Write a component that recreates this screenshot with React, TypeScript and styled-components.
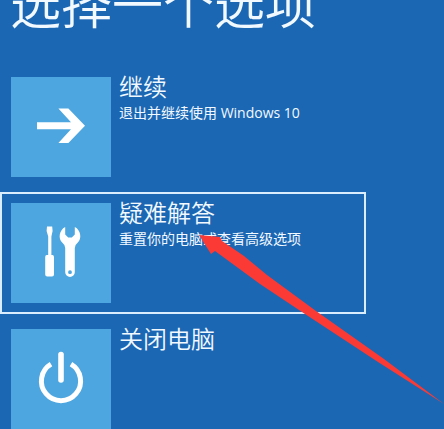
import React from "react";
import styled, { createGlobalStyle, css } from "styled-components";

const GlobalStyle = createGlobalStyle`
  * { box-sizing: border-box; }
  body {
    margin: 0;
    background: #1b67b3;
    color: #f2f9ff;
    font-family: "Open Sans", "Noto Sans CJK SC", sans-serif;
  }
`;

const Page = styled.main`
  height: 100vh;
  overflow: hidden;
`;

const Title = styled.h1`
  margin: -38px 0 24px 10px;
  font-family: "Noto Sans CJK SC", sans-serif;
  font-size: 51px;
  line-height: 80px;
  font-weight: 350;
  white-space: nowrap;
`;

const OptionList = styled.div`
  display: flex;
  flex-direction: column;
  gap: 4px;
  width: calc(100% - 78px);
`;

const Option = styled.button<{ $focused?: boolean }>`
  position: relative;
  display: flex;
  align-items: flex-start;
  gap: 8px;
  width: 100%;
  padding: 9px;
  border: 2px solid transparent;
  background: none;
  color: inherit;
  font: inherit;
  text-align: left;
  outline: none;
  ${(p) =>
    p.$focused &&
    css`
      border-color: #d9edff;
    `}
`;

const Tile = styled.span`
  display: flex;
  flex: none;
  width: 100px;
  height: 100px;
  background: #4da6df;
`;

const Labels = styled.span`
  display: flex;
  flex-direction: column;
  margin-top: -8px;
  white-space: nowrap;
`;

const Name = styled.span`
  font-family: "Noto Sans CJK SC", sans-serif;
  font-size: 24px;
  line-height: 34px;
  font-weight: 350;
`;

const Description = styled.span`
  font-size: 14px;
  line-height: 20px;
`;

const Pointer = styled.svg`
  position: absolute;
  left: 196px;
  top: 40px;
  z-index: 1;
  pointer-events: none;
`;

const ArrowIcon = () => (
  <svg width="100" height="100" viewBox="0 0 100 100" fill="#fff" aria-hidden="true">
    <path d="M26 45.2H60L47.4 31.5H57.4L74 48.7L57.4 66H47.4L60 52.2H26Z" />
  </svg>
);

const ToolsIcon = () => (
  <svg width="100" height="100" viewBox="0 0 100 100" fill="#fff" aria-hidden="true">
    <path d="M36 23.5H41.2L41.6 28L40.4 33.5V52H41.4Q43 52 43 54V71.5Q43 73.5 41 73.5H36.2Q34.2 73.5 34.2 71.5V54Q34.2 52 35.8 52H37.2V33.5L35.6 28Z" />
    <path
      fillRule="evenodd"
      d="M54.2 24C48.2 27 46.8 35.6 51.4 39.8Q54.2 42 54.2 45V69.2A4.8 4.8 0 0 0 63.8 69.2V45Q63.8 42 66.6 39.8C71.2 35.6 69.8 27 63.8 24V31.4L60.8 34.6H57.2L54.2 31.4ZM59 67.3A1.9 1.9 0 1 1 59 71.1A1.9 1.9 0 1 1 59 67.3Z"
    />
  </svg>
);

const PowerIcon = () => (
  <svg
    width="100"
    height="100"
    viewBox="0 0 100 100"
    fill="none"
    stroke="#fff"
    aria-hidden="true"
  >
    <path strokeWidth="5" d="M40 35.2A19.6 19.6 0 1 0 60 35.2" />
    <path strokeWidth="5.6" strokeLinecap="round" d="M50 25.5V51" />
  </svg>
);

type OptionItem = {
  name: string;
  description?: string;
  icon: React.ReactNode;
  focused?: boolean;
};

const options: OptionItem[] = [
  { name: "继续", description: "退出并继续使用 Windows 10", icon: <ArrowIcon /> },
  {
    name: "疑难解答",
    description: "重置你的电脑或查看高级选项",
    icon: <ToolsIcon />,
    focused: true,
  },
  { name: "关闭电脑", icon: <PowerIcon /> },
];

export default function App() {
  return (
    <Page>
      <GlobalStyle />
      <Title>选择一个选项</Title>
      <OptionList>
        {options.map((o) => (
          <Option key={o.name} type="button" $focused={o.focused}>
            <Tile>{o.icon}</Tile>
            <Labels>
              <Name>{o.name}</Name>
              {o.description && <Description>{o.description}</Description>}
            </Labels>
            {o.focused && (
              <Pointer width="248" height="172" viewBox="0 0 248 172" aria-hidden="true">
                <path
                  fill="#fb3a35"
                  d="M1 1L22 3L24 7L46 22L69 41L118 77L186 125L246 170L180 128L107 80L62 50L17 17L13 20Z"
                />
              </Pointer>
            )}
          </Option>
        ))}
      </OptionList>
    </Page>
  );
}
